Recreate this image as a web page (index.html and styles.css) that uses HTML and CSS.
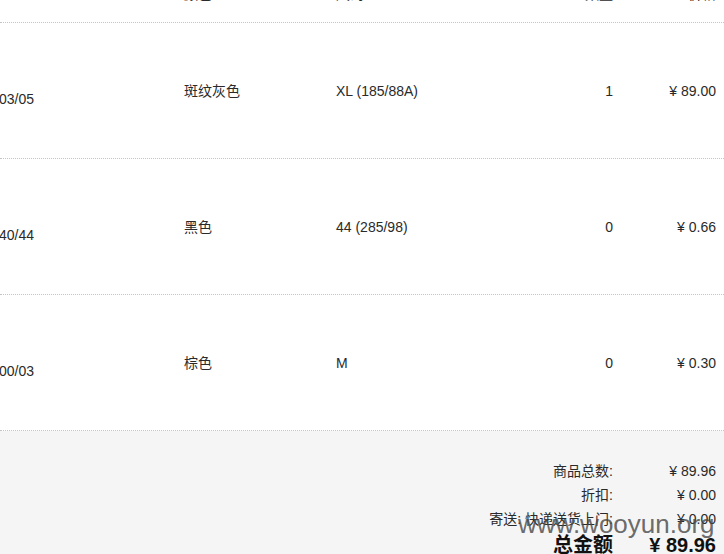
FILE: index.html
```html
<!DOCTYPE html>
<html lang="zh-CN">
<head>
<meta charset="utf-8">
<title>订单明细</title>
<link rel="stylesheet" href="styles.css">
</head>
<body>
<div class="order">
  <div class="row head">
    <div class="cell"></div>
    <div class="cell">颜色</div>
    <div class="cell">尺码</div>
    <div class="cell num">数量</div>
    <div class="cell num">价格</div>
  </div>
  <div class="row item">
    <div class="cell code">03/05</div>
    <div class="cell">斑纹灰色</div>
    <div class="cell">XL (185/88A)</div>
    <div class="cell num">1</div>
    <div class="cell num">¥ 89.00</div>
  </div>
  <div class="row item">
    <div class="cell code">40/44</div>
    <div class="cell">黑色</div>
    <div class="cell">44 (285/98)</div>
    <div class="cell num">0</div>
    <div class="cell num">¥ 0.66</div>
  </div>
  <div class="row item">
    <div class="cell code">00/03</div>
    <div class="cell">棕色</div>
    <div class="cell">M</div>
    <div class="cell num">0</div>
    <div class="cell num">¥ 0.30</div>
  </div>
  <div class="summary">
    <div class="line">
      <span class="label">商品总数:</span>
      <span class="value">¥ 89.96</span>
    </div>
    <div class="line">
      <span class="label">折扣:</span>
      <span class="value">¥ 0.00</span>
    </div>
    <div class="line">
      <span class="label">寄送: 快递送货上门:</span>
      <span class="value">¥ 0.00</span>
    </div>
    <div class="line total">
      <span class="label">总金额</span>
      <span class="value">¥ 89.96</span>
    </div>
  </div>
</div>
<div class="watermark">www.wooyun.org</div>
</body>
</html>
```
FILE: styles.css
```css
html, body {
  margin: 0;
  padding: 0;
  overflow: hidden;
  background: #fff;
}
body {
  position: relative;
  width: 724px;
  height: 554px;
  font-family: "Liberation Sans", "Noto Sans CJK SC", sans-serif;
  font-size: 14px;
  color: #2a2a2a;
}
.order {
  margin-top: -34px;
}
.row {
  display: grid;
  grid-template-columns: 184px 152px 1fr 100px 103px;
  align-items: center;
  border-bottom: 1px dotted #c4c4c4;
}
.head {
  height: 56px;
}
.item {
  height: 135px;
}
.cell {
  line-height: 16px;
  white-space: nowrap;
}
.num {
  text-align: right;
  padding-right: 8px;
}
.code {
  padding-top: 16px;
  margin-left: -1px;
}
.summary {
  background: #f5f5f5;
  padding: 28px 0 20px;
}
.line {
  display: grid;
  grid-template-columns: 1fr 103px;
  line-height: 24px;
}
.label {
  text-align: right;
  padding-right: 8px;
}
.value {
  text-align: right;
  padding-right: 8px;
}
.total {
  font-size: 20px;
  font-weight: bold;
  line-height: 28px;
  color: #111;
}
.watermark {
  position: absolute;
  left: 518px;
  top: 509px;
  font-family: "Liberation Sans", sans-serif;
  font-size: 26px;
  color: rgba(70, 70, 70, 0.8);
  white-space: nowrap;
}
```
